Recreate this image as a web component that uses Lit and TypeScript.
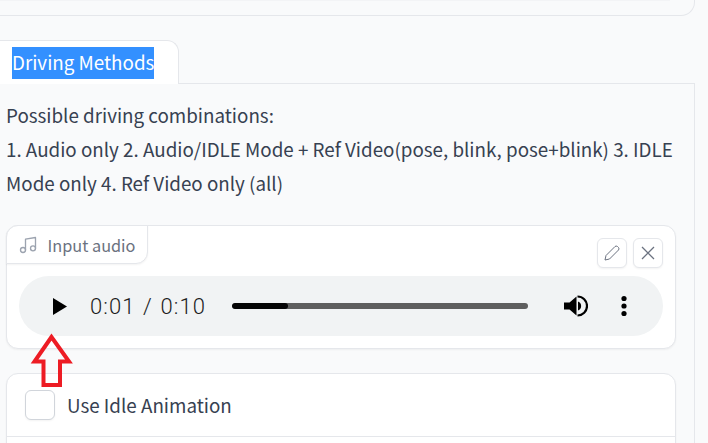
import { LitElement, html, css } from "lit";
import { customElement } from "lit/decorators.js";

@customElement("app-root")
export class AppRoot extends LitElement {
  static styles = css`
    :host {
      display: block;
      position: relative;
      width: 708px;
      height: 443px;
      overflow: hidden;
      background: #f9fafb;
      color: #374151;
      font-family: "Noto Sans CJK SC", "Noto Sans", sans-serif;
    }
    .top {
      height: 15px;
      margin-right: 13px;
      border: 1px solid #e5e7eb;
      border-width: 0 1px 1px 0;
      border-bottom-right-radius: 14px;
    }
    .shade {
      height: 1px;
      margin-right: 24px;
      background: #f3f4f6;
    }
    .tabrow {
      display: flex;
      margin-top: 24px;
    }
    .tab {
      width: 179px;
      height: 44px;
      box-sizing: border-box;
      background: #fff;
      border: 1px solid #e5e7eb;
      border-width: 1px 1px 0 0;
      border-top-right-radius: 12px;
      padding: 6px 0 0 12px;
      font-size: 18.8px;
      line-height: 30px;
      color: #fff;
    }
    .sel {
      display: inline-block;
      height: 32px;
      background: #3390ff;
      white-space: nowrap;
    }
    .tabfill {
      flex: 1;
      margin-right: 13px;
      margin-top: 43px;
      border-top: 1px solid #e5e7eb;
      border-right: 1px solid #e5e7eb;
    }
    .panel {
      margin-right: 13px;
      border-right: 1px solid #e5e7eb;
      padding: 14px 18px 0 6px;
      height: 400px;
    }
    .md {
      font-size: 18.8px;
      line-height: 34px;
      color: #374151;
    }
    .card {
      background: #fff;
      border: 1px solid #e5e7eb;
      border-radius: 12px;
      box-shadow: 0 1px 2px rgba(0, 0, 0, 0.05);
    }
    .audio {
      position: relative;
      margin-top: 25px;
      height: 124px;
      box-sizing: border-box;
      padding: 12px 12px 0;
    }
    .label {
      position: absolute;
      left: -1px;
      top: -1px;
      display: flex;
      align-items: center;
      gap: 9.5px;
      box-sizing: border-box;
      width: 142px;
      height: 39px;
      padding-left: 11px;
      background: #fff;
      border: 1px solid #e5e7eb;
      border-radius: 12px 0 12px 0;
      box-shadow: 0 1px 2px rgba(0, 0, 0, 0.05);
      font-size: 16.3px;
      color: #6b7280;
    }
    .tools {
      display: flex;
      justify-content: flex-end;
      gap: 6px;
      height: 38px;
    }
    .tool {
      display: flex;
      align-items: center;
      justify-content: center;
      width: 30px;
      height: 30px;
      box-sizing: border-box;
      border: 1px solid #e5e7eb;
      border-radius: 6px;
      background: #fff;
      box-shadow: 0 1px 2px rgba(0, 0, 0, 0.05);
    }
    .player {
      display: flex;
      align-items: center;
      height: 60px;
      border-radius: 30px;
      background: #f1f3f4;
      padding-left: 34px;
    }
    .time {
      margin-left: 23px;
      width: 142px;
      font-family: Roboto, sans-serif;
      font-size: 22px;
      font-weight: 300;
      letter-spacing: 1.1px;
      word-spacing: 1px;
      color: #1c1c1c;
      white-space: nowrap;
    }
    .track {
      width: 296px;
      height: 6px;
      border-radius: 3px;
      background: #5e5e5e;
      overflow: hidden;
    }
    .fill {
      height: 100%;
      border-radius: 3px;
      background: #050505;
    }
    .vol {
      margin-left: 36px;
      display: block;
    }
    .dots {
      margin-left: 33px;
      display: block;
    }
    .opts {
      margin-top: 24px;
      height: 200px;
    }
    .row {
      display: flex;
      align-items: center;
      gap: 12px;
      height: 62px;
      padding-left: 18px;
      border-bottom: 1px solid #e5e7eb;
      font-size: 18.8px;
      color: #374151;
    }
    .rowtext {
      margin-top: -2px;
    }
    .check {
      width: 30px;
      height: 30px;
      box-sizing: border-box;
      border: 1px solid #d1d5db;
      border-radius: 6px;
      background: #fff;
      box-shadow: 0 1px 2px rgba(0, 0, 0, 0.05);
    }
    .arrow {
      position: absolute;
      left: 30px;
      top: 332px;
    }
  `;

  render() {
    const progress = 19;
    return html`
      <div class="top"><div class="shade"></div></div>
      <div class="tabrow">
        <div class="tab"><span class="sel">Driving Methods</span></div>
        <div class="tabfill"></div>
      </div>
      <div class="panel">
        <div class="md">
          Possible driving combinations:<br />
          1. Audio only 2. Audio/IDLE Mode + Ref Video(pose, blink, pose+blink) 3. IDLE Mode only 4. Ref Video only (all)
        </div>
        <div class="card audio">
          <div class="label">
            <svg width="20" height="20" viewBox="0 0 24 24" fill="none" stroke="#9ca3af" stroke-width="1.6" stroke-linecap="round" stroke-linejoin="round">
              <path d="M9 18V5l12-2v13"></path>
              <circle cx="6" cy="18" r="3"></circle>
              <circle cx="18" cy="16" r="3"></circle>
            </svg>
            <span>Input audio</span>
          </div>
          <div class="tools">
            <div class="tool">
              <svg width="16" height="16" viewBox="0 0 16 16" fill="none" stroke="#6b7280" stroke-width="1" stroke-linejoin="round">
                <path d="M1 15l1-4.5L11 1.500q1-1 2.500 0l1 1q1 1.500 0 2.500L5.500 14z"></path>
              </svg>
            </div>
            <div class="tool">
              <svg width="16" height="16" viewBox="0 0 16 16" fill="none" stroke="#6b7280" stroke-width="1.3">
                <path d="M2 2l12 12M14 2L2 14"></path>
              </svg>
            </div>
          </div>
          <div class="player">
            <svg width="14" height="17" viewBox="0 0 14 17"><path d="M0 0l14 8.500L0 17z" fill="#000"></path></svg>
            <span class="time">0:01 / 0:10</span>
            <div class="track"><div class="fill" style="width:${progress}%"></div></div>
            <svg class="vol" width="24" height="24" viewBox="0 0 24 24">
              <path d="M0 8.500h5.500L12.500 2.500v19l-7-6H0z" fill="#000"></path>
              <path d="M14 7.500a4.800 4.800 0 0 1 0 9z" fill="#000"></path>
              <path d="M13.500 2.500a9.500 9.500 0 0 1 0 19" fill="none" stroke="#000" stroke-width="2.200"></path>
            </svg>
            <svg class="dots" width="6" height="22" viewBox="0 0 6 22">
              <circle cx="3" cy="3.500" r="2.600" fill="#000"></circle>
              <circle cx="3" cy="11" r="2.600" fill="#000"></circle>
              <circle cx="3" cy="18.500" r="2.600" fill="#000"></circle>
            </svg>
          </div>
        </div>
        <div class="card opts">
          <div class="row"><div class="check"></div><span class="rowtext">Use Idle Animation</span></div>
        </div>
      </div>
      <svg class="arrow" width="44" height="58" viewBox="0 0 44 58">
        <path d="M21.500 5L4.500 29.500h9v23.500h16.500V29.500h9z" fill="none" stroke="#ed1c24" stroke-width="4"></path>
      </svg>
    `;
  }
}
